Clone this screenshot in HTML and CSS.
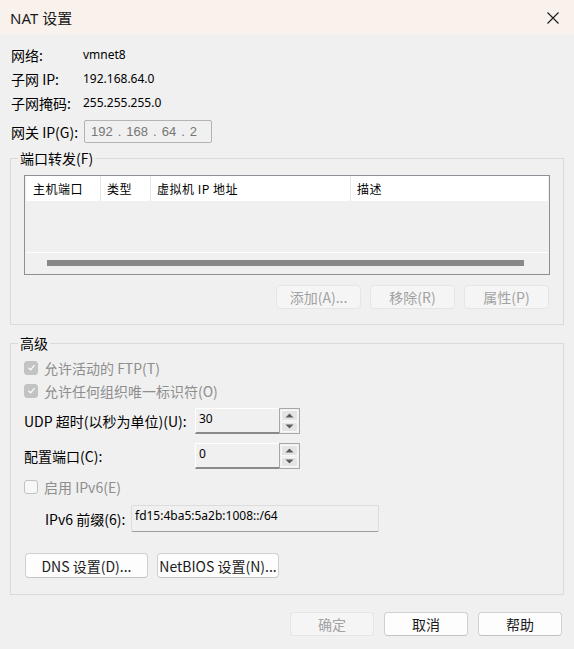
FILE: index.html
```html
<!DOCTYPE html>
<html lang="zh-CN">
<head>
<meta charset="utf-8">
<title>NAT 设置</title>
<link rel="stylesheet" href="styles.css">
</head>
<body>
<div class="window">
  <div class="titlebar">
    <span class="title">NAT 设置</span>
    <svg class="close" width="12" height="12" viewBox="0 0 12 12"><path d="M0.5 0.5 L11.5 11.5 M11.5 0.5 L0.5 11.5" stroke="#1a1a1a" stroke-width="1.1" fill="none"/></svg>
  </div>

  <div class="info">
    <div class="row"><span class="lbl">网络:</span><span class="v">vmnet8</span></div>
    <div class="row"><span class="lbl">子网 IP:</span><span class="v">192.168.64.0</span></div>
    <div class="row"><span class="lbl">子网掩码:</span><span class="v">255.255.255.0</span></div>
    <div class="row gw"><span class="lbl gwl">网关 IP(G):</span><span class="ipbox"><span>192</span><span>.</span><span>168</span><span>.</span><span>64</span><span>.</span><span>2</span></span></div>
  </div>

  <fieldset class="group pf">
    <legend>端口转发(F)</legend>
    <div class="grid">
      <div class="thead">
        <div class="th c1">主机端口</div>
        <div class="th c2">类型</div>
        <div class="th c3">虚拟机 IP 地址</div>
        <div class="th c4">描述</div>
      </div>
      <div class="tbody"></div>
      <div class="hline"></div>
      <div class="hscroll"><div class="thumb"></div></div>
    </div>
    <div class="btnrow">
      <button class="btn dis w85">添加(A)...</button>
      <button class="btn dis w85">移除(R)</button>
      <button class="btn dis w85">属性(P)</button>
    </div>
  </fieldset>

  <fieldset class="group adv">
    <legend>高级</legend>
    <div class="chk-row r1">
      <span class="cb checked"><svg width="9" height="9" viewBox="0 0 9 9"><path d="M1.5 4.8 L3.6 6.8 L7.6 2.2" stroke="#fff" stroke-width="1.2" fill="none"/></svg></span>
      <span class="dtext">允许活动的 FTP(T)</span>
    </div>
    <div class="chk-row">
      <span class="cb checked"><svg width="9" height="9" viewBox="0 0 9 9"><path d="M1.5 4.8 L3.6 6.8 L7.6 2.2" stroke="#fff" stroke-width="1.2" fill="none"/></svg></span>
      <span class="dtext">允许任何组织唯一标识符(O)</span>
    </div>
    <div class="spin-row s1">
      <span class="slbl">UDP 超时(以秒为单位)(U):</span>
      <div class="spin">
        <div class="spin-in v">30</div>
        <div class="spin-btns">
          <div class="sb"><svg width="9" height="5" viewBox="0 0 9 5"><path d="M0.5 4.5 L4.5 0.5 L8.5 4.5 Z" fill="#5c5c5c"/></svg></div>
          <div class="sb"><svg width="9" height="5" viewBox="0 0 9 5"><path d="M0.5 0.5 L4.5 4.5 L8.5 0.5 Z" fill="#5c5c5c"/></svg></div>
        </div>
      </div>
    </div>
    <div class="spin-row s2">
      <span class="slbl">配置端口(C):</span>
      <div class="spin">
        <div class="spin-in v">0</div>
        <div class="spin-btns">
          <div class="sb"><svg width="9" height="5" viewBox="0 0 9 5"><path d="M0.5 4.5 L4.5 0.5 L8.5 4.5 Z" fill="#5c5c5c"/></svg></div>
          <div class="sb"><svg width="9" height="5" viewBox="0 0 9 5"><path d="M0.5 0.5 L4.5 4.5 L8.5 0.5 Z" fill="#5c5c5c"/></svg></div>
        </div>
      </div>
    </div>
    <div class="chk-row r3">
      <span class="cb"></span>
      <span class="dtext">启用 IPv6(E)</span>
    </div>
    <div class="pfx-row">
      <span class="plbl">IPv6 前缀(6):</span>
      <div class="pfx-in v">fd15:4ba5:5a2b:1008::/64</div>
    </div>
    <div class="btnrow2">
      <button class="btn w123">DNS 设置(D)...</button>
      <button class="btn w122">NetBIOS 设置(N)...</button>
    </div>
  </fieldset>

  <div class="footer">
    <button class="btn dis w84">确定</button>
    <button class="btn w84">取消</button>
    <button class="btn w84">帮助</button>
  </div>
</div>
</body>
</html>
```

FILE: styles.css
```css
* { box-sizing: border-box; }
html, body { margin: 0; padding: 0; }
body {
  width: 574px;
  height: 649px;
  background: #f0f0f0;
  font-family: "Noto Sans CJK SC", sans-serif;
  font-size: 14px;
  line-height: 18px;
  color: #000;
  overflow: hidden;
}
.window { width: 574px; height: 649px; }
.v { font-family: "Noto Sans", "Noto Sans CJK SC", sans-serif; font-size: 12px; }

.titlebar {
  height: 35px;
  background: #f9f1eb;
  display: flex;
  align-items: center;
  justify-content: space-between;
  padding: 0 15px 0 10px;
}
.title { font-family: "Noto Sans", "Noto Sans CJK SC", sans-serif; font-size: 15px; color: #1b1b1b; }
.close { display: block; }

.info { margin-top: 8px; padding-left: 11px; }
.row { height: 24px; display: flex; align-items: center; }
.lbl { width: 72px; flex: none; }
.row.gw { margin-top: 5px; height: 23px; }
.gwl { width: 73px; }
.ipbox {
  width: 128px;
  height: 23px;
  border: 1px solid #b4b4b4;
  border-radius: 2px;
  background: #f0f0f0;
  color: #767676;
  font-family: "Liberation Sans", sans-serif;
  font-size: 13px;
  display: flex;
  align-items: center;
  gap: 5px;
  padding-left: 6px;
}

.group {
  margin: 0 10px;
  border: 1px solid #dadada;
  padding: 0;
  min-width: 0;
}
.group legend {
  padding: 0 2px;
  line-height: 16px;
  height: 16px;
  color: #000;
}
.pf { margin-top: 7px; padding: 9px 13px 15px 13px; }
.pf legend { margin-left: -6px; }

.grid {
  height: 100px;
  border: 1px solid #8f8f98;
  padding: 0 1px;
  display: flex;
  flex-direction: column;
}
.thead { height: 25px; display: flex; background: #fff; flex: none; }
.th {
  height: 25px;
  line-height: 25px;
  border-right: 1px solid #e5e5e5;
  padding-left: 6px;
  font-size: 12px;
  letter-spacing: 0.5px;
}
.c1 { width: 75px; padding-left: 7px; }
.c2 { width: 50px; }
.c3 { width: 200px; }
.c4 { flex: 1; border-right: none; }
.tbody { height: 51px; flex: none; }
.hline { height: 1px; background: #fff; flex: none; }
.hscroll { flex: 1; padding-top: 7px; }
.thumb { margin-left: 21px; width: 477px; height: 6px; background: #888888; }

.btn {
  font-family: "Noto Sans CJK SC", sans-serif;
  font-size: 14px;
  line-height: 18px;
  height: 24px;
  background: #fdfdfd;
  border: 1px solid #d0d0d0;
  border-bottom-color: #c4c4c4;
  border-radius: 4px;
  color: #1b1b1b;
  padding: 0;
}
.btn.dis { background: #f5f5f5; border-color: #e5e5e5; color: #a2a2a2; }
.w85 { width: 85px; }
.w84 { width: 84px; }
.w123 { width: 123px; }
.w122 { width: 122px; }

.btnrow {
  margin-top: 10px;
  display: flex;
  justify-content: flex-end;
  gap: 9px;
  padding-right: 1px;
}

.adv { margin-top: 10px; padding: 5px 13px 16px 13px; }
.adv legend { margin-left: -6px; }

.chk-row { height: 23px; display: flex; align-items: center; }
.chk-row.r3 { margin-top: 7px; height: 22px; }
.cb {
  width: 14px;
  height: 14px;
  border-radius: 3px;
  border: 1px solid #c2c2c2;
  background: #f7f7f7;
  margin-right: 6px;
  display: flex;
  align-items: center;
  justify-content: center;
  flex: none;
}
.cb.checked { background: #c3c3c3; border-color: #c3c3c3; }
.cb svg { display: block; }
.dtext { color: #8e8e8e; }

.spin-row { display: flex; align-items: center; height: 26px; }
.spin-row.s1 { margin-top: 6px; }
.spin-row.s2 { margin-top: 9px; }
.slbl { width: 171px; flex: none; }
.spin { display: flex; height: 26px; }
.spin-in {
  width: 84px;
  height: 26px;
  border-top: 1px solid #fff;
  border-left: 1px solid #fff;
  border-bottom: 2px solid #8a8a8a;
  padding: 2px 0 0 3px;
  line-height: 16px;
}
.spin-btns {
  width: 21px;
  height: 26px;
  border: 1px solid #a8a8a8;
  display: flex;
  flex-direction: column;
  gap: 1px;
  padding: 1px;
  background: #f0f0f0;
}
.sb {
  flex: 1;
  background: #e4e4e4;
  border: 1px solid #f8f8f8;
  display: flex;
  align-items: center;
  justify-content: center;
}
.sb svg { display: block; }

.pfx-row { margin-top: 7px; height: 27px; display: flex; align-items: center; }
.plbl { width: 107px; padding-left: 21px; flex: none; }
.pfx-in {
  width: 248px;
  height: 27px;
  border: 1px solid #dcdcdc;
  border-bottom: 1px solid #9c9c9c;
  border-radius: 2px;
  background: #f0f0f0;
  padding: 2px 0 0 3px;
  line-height: 16px;
}

.btnrow2 { margin-top: 21px; display: flex; gap: 9px; padding-left: 1px; }
.btnrow2 .btn { height: 25px; }

.footer {
  margin-top: 17px;
  display: flex;
  justify-content: flex-end;
  gap: 10px;
  padding-right: 12px;
}
```
